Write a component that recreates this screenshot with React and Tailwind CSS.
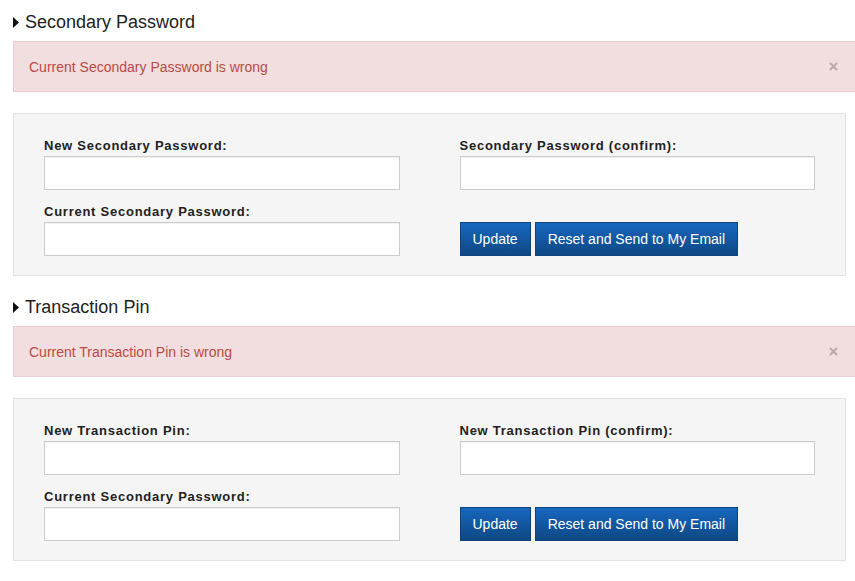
import React from "react";

const font = { fontFamily: '"Liberation Sans", Arial, sans-serif' };

/* Section heading with caret */
function Heading({ children }) {
    return (
        <div className="flex items-center h-[20px] pl-[13px]">
            <svg width="6" height="11" viewBox="0 0 6 11" className="mr-[6px]">
                <path d="M0 0 L6 5.5 L0 11 Z" fill="#111" />
            </svg>
            <h3 className="text-[18px] leading-[20px] text-[#222]">{children}</h3>
        </div>
    );
}

function Alert({ children }) {
    return (
        <div className="mt-[9px] ml-[13px] w-[850px] h-[51px] border border-[#ebccd1] bg-[#f2dede] pl-[15px] pr-[20px] flex items-center justify-between">
            <span className="text-[14px] leading-[20px] text-[#b94a48]">{children}</span>
            <svg width="9" height="9" viewBox="0 0 9 9" className="mr-[4px]">
                <path d="M1 1 L8 8 M8 1 L1 8" stroke="#b9a9aa" strokeWidth="2" />
            </svg>
        </div>
    );
}

function Field({ label }) {
    return (
        <div>
            <label className="block h-[20px] text-[13px] leading-[20px] font-bold text-[#222] tracking-[0.75px]">
                {label}
            </label>
            <input
                type="password"
                className="block w-full h-[34px] bg-white border border-[#ccc] shadow-[inset_0_1px_1px_rgba(0,0,0,0.06)] outline-none"
            />
        </div>
    );
}

function Button({ children }) {
    return (
        <button className="h-[34px] px-[12px] text-[14px] text-white border border-[#0d4480] bg-gradient-to-b from-[#1767c0] to-[#0e4883]">
            {children}
        </button>
    );
}

function Section({ title, error, newLabel, confirmLabel, className = "" }) {
    return (
        <div className={className}>
            <Heading>{title}</Heading>
            <Alert>{error}</Alert>
            <div className="mt-[21px] ml-[13px] w-[833px] h-[163px] border border-[#e3e3e3] bg-[#f5f5f5] px-[30px] pt-[22px]">
                <div className="grid grid-cols-2 gap-x-[60px] gap-y-[12px]">
                    <Field label={newLabel} />
                    <Field label={confirmLabel} />
                    <Field label="Current Secondary Password:" />
                    <div className="pt-[20px] flex gap-[4px]">
                        <Button>Update</Button>
                        <Button>Reset and Send to My Email</Button>
                    </div>
                </div>
            </div>
        </div>
    );
}

export default function App() {
    return (
        <div style={font} className="w-[855px] h-[581px] bg-white overflow-hidden pt-[12px]">
            <Section
                title="Secondary Password"
                error="Current Secondary Password is wrong"
                newLabel="New Secondary Password:"
                confirmLabel="Secondary Password (confirm):"
            />
            <Section
                className="mt-[21px]"
                title="Transaction Pin"
                error="Current Transaction Pin is wrong"
                newLabel="New Transaction Pin:"
                confirmLabel="New Transaction Pin (confirm):"
            />
        </div>
    );
}
